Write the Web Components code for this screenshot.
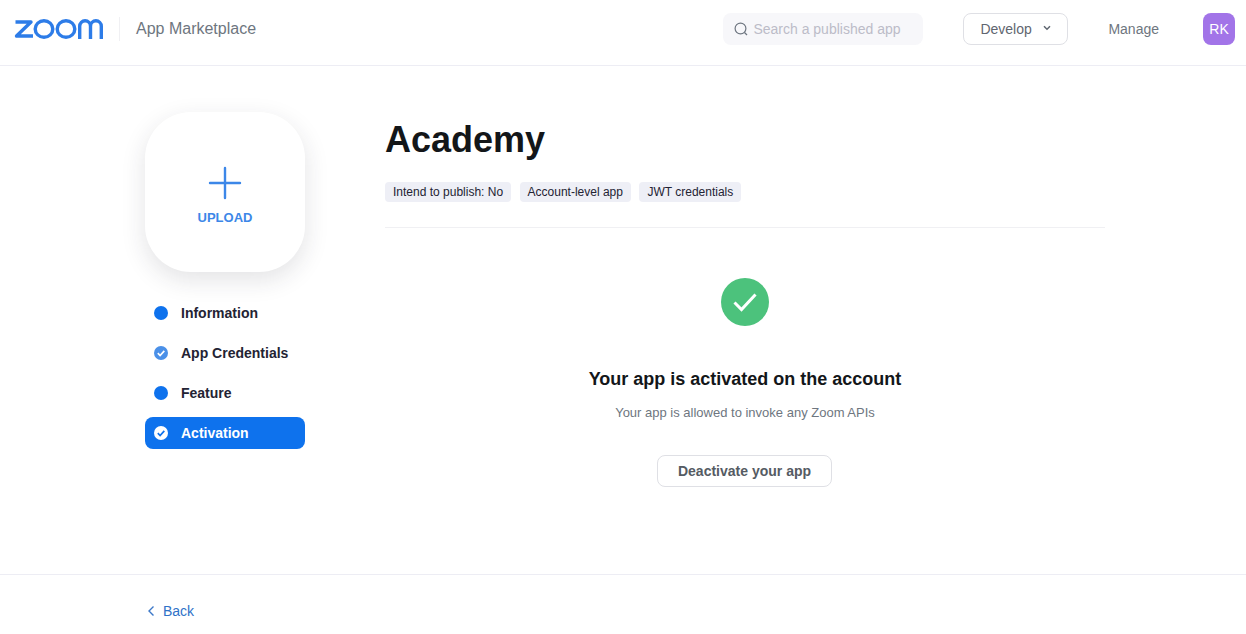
<!DOCTYPE html>
<html lang="en">
<head>
<meta charset="utf-8">
<title>App Marketplace</title>
<style>
  html, body { margin: 0; padding: 0; background: #fff; }
  body { font-family: "Liberation Sans", Arial, sans-serif; color: #131619; }
</style>
</head>
<body>
<app-shell></app-shell>
<script>
class SiteHeader extends HTMLElement {
  constructor () {
    super()
    this.attachShadow({ mode: 'open' }).innerHTML = `
      <style>
        :host { display: flex; align-items: center; height: 58px; padding: 0 11px 7px 14px; border-bottom: 1px solid #ededf4; }
        .logo { display: block; width: 90px; height: 20px; }
        .sep { width: 1px; height: 24px; background: #f0f0f3; margin: 0 16px 0 15px; }
        .brand { font-size: 16px; color: #6e7680; }
        .search { margin-left: auto; width: 200px; height: 32px; background: #f7f7fa; border-radius: 8px; display: flex; align-items: center; box-sizing: border-box; padding-left: 11px; gap: 5px; font-size: 14px; color: #bcbcc8; }
        .develop { margin-left: 40px; width: 105px; height: 32px; box-sizing: border-box; border: 1px solid #dfe0e5; border-radius: 8px; display: flex; align-items: center; padding-left: 16px; gap: 11px; font-size: 14px; color: #5f6670; }
        .develop svg { margin-top: -3px; }
        .manage { margin-left: 40px; font-size: 14px; color: #6e7680; }
        .avatar { margin-left: 44px; width: 32px; height: 32px; border-radius: 8px; background: #a274e8; color: #fff; font-size: 14px; display: flex; align-items: center; justify-content: center; }
      </style>
      <svg class="logo" viewBox="0 0 90 20" fill="none" stroke="#2d7ce8" stroke-width="3.4">
        <polyline points="1.5,3 17,3 2.5,17 19,17" stroke-linejoin="round"/>
        <ellipse cx="30" cy="10" rx="8.8" ry="8.3"/>
        <ellipse cx="52" cy="10" rx="8.8" ry="8.3"/>
        <path d="M65.7 20V7.2a5.4 5.4 0 0 1 10.8 0V20M76.5 7.2a5.4 5.4 0 0 1 10.8 0V20"/>
      </svg>
      <div class="sep"></div>
      <div class="brand">App Marketplace</div>
      <div class="search">
        <svg width="14" height="14" viewBox="0 0 14 14" fill="none" stroke="#6e7680" stroke-width="1.2"><circle cx="6.5" cy="6.5" r="5.4"/><path d="M10.5 10.5l2.5 2.5"/></svg>
        <span>Search a published app</span>
      </div>
      <div class="develop">
        <span>Develop</span>
        <svg width="8" height="6" viewBox="0 0 8 6" fill="none" stroke="#5f6670" stroke-width="1.5"><path d="M1 1.2l3 3 3-3"/></svg>
      </div>
      <div class="manage">Manage</div>
      <div class="avatar">RK</div>
    `
  }
}

class UploadCard extends HTMLElement {
  constructor () {
    super()
    this.attachShadow({ mode: 'open' }).innerHTML = `
      <style>
        :host { display: flex; flex-direction: column; align-items: center; width: 160px; height: 160px; border-radius: 46px; background: #fff; box-shadow: 0 8px 24px rgba(35, 35, 51, .13); box-sizing: border-box; padding-top: 54px; }
        svg { display: block; }
        span { margin-top: 9px; font-size: 13px; line-height: 18px; font-weight: 700; color: #3c87e8; }
      </style>
      <svg width="34" height="34" viewBox="0 0 34 34" stroke="#3c87e8" stroke-width="2.4" stroke-linecap="round"><path d="M17 2v30M2 17h30"/></svg>
      <span><slot></slot></span>
    `
  }
}

class StepItem extends HTMLElement {
  constructor () {
    super()
    this.attachShadow({ mode: 'open' })
  }

  connectedCallback () {
    const done = this.hasAttribute('done')
    const active = this.hasAttribute('active')
    const fill = active ? '#fff' : done ? '#4a90e8' : '#0e72ed'
    const tick = active ? '#0e72ed' : '#fff'
    this.shadowRoot.innerHTML = `
      <style>
        :host { display: flex; align-items: center; height: 32px; border-radius: 8px; padding-left: 9px; gap: 13px; font-size: 14px; font-weight: 700; color: ${active ? '#fff' : '#232333'}; background: ${active ? '#0e72ed' : 'transparent'}; }
        svg { display: block; flex: none; }
      </style>
      <svg width="14" height="14" viewBox="0 0 14 14">
        <circle cx="7" cy="7" r="7" fill="${fill}"/>
        ${done ? `<path d="M3.8 7.2l2.3 2.3 4.2-4.6" fill="none" stroke="${tick}" stroke-width="1.7"/>` : ''}
      </svg>
      <slot></slot>
    `
  }
}

class TagChip extends HTMLElement {
  constructor () {
    super()
    this.attachShadow({ mode: 'open' }).innerHTML = `
      <style>
        :host { display: inline-block; height: 20px; line-height: 20px; padding: 0 8px; border-radius: 4px; background: #eeeff6; font-size: 12px; color: #232333; }
      </style>
      <slot></slot>
    `
  }
}

class ActivationPanel extends HTMLElement {
  constructor () {
    super()
    this.attachShadow({ mode: 'open' }).innerHTML = `
      <style>
        :host { display: flex; flex-direction: column; align-items: center; padding-top: 50px; }
        svg { display: block; }
        h2 { margin: 40px 0 0; font-size: 18px; line-height: 26px; font-weight: 700; color: #131619; }
        p { margin: 12px 0 0; font-size: 13px; line-height: 18px; color: #6e7680; }
        button { margin: 33px 1px 0 0; width: 175px; height: 32px; padding: 0; background: #fff; border: 1px solid #dfe0e5; border-radius: 8px; font: 700 14px "Liberation Sans", Arial, sans-serif; color: #555b63; }
      </style>
      <svg width="48" height="48" viewBox="0 0 48 48">
        <circle cx="24" cy="24" r="24" fill="#4cc27c"/>
        <path d="M13.5 24.5l7 7 14-15" fill="none" stroke="#fff" stroke-width="3"/>
      </svg>
      <h2>Your app is activated on the account</h2>
      <p>Your app is allowed to invoke any Zoom APIs</p>
      <button>Deactivate your app</button>
    `
  }
}

class SiteFooter extends HTMLElement {
  constructor () {
    super()
    this.attachShadow({ mode: 'open' }).innerHTML = `
      <style>
        :host { display: flex; align-items: center; gap: 8px; height: 46px; padding: 13px 0 0 147px; border-top: 1px solid #ededf4; font-size: 14px; color: #2f72c8; }
        svg { display: block; }
      </style>
      <svg width="8" height="12" viewBox="0 0 8 12" fill="none" stroke="#3c78c8" stroke-width="1.4"><path d="M6.5 1.5L2 6l4.5 4.5"/></svg>
      <slot></slot>
    `
  }
}

class AppShell extends HTMLElement {
  constructor () {
    super()
    this.attachShadow({ mode: 'open' }).innerHTML = `
      <style>
        :host { display: flex; flex-direction: column; height: 634px; overflow: hidden; }
        .body { flex: 1; display: flex; padding: 46px 0 0 145px; min-height: 0; }
        aside { width: 160px; margin-right: 80px; }
        nav { display: flex; flex-direction: column; gap: 8px; margin-top: 25px; }
        main { width: 720px; }
        h1 { margin: 0; padding-top: 1px; font: 700 36px/53px "Liberation Sans", sans-serif; color: #131619; }
        .tags { display: flex; gap: 8.5px; margin-top: 16px; padding-bottom: 25px; border-bottom: 1px solid #f0f0f3; }
      </style>
      <site-header></site-header>
      <div class="body">
        <aside>
          <upload-card>UPLOAD</upload-card>
          <nav>
            <step-item>Information</step-item>
            <step-item done>App Credentials</step-item>
            <step-item>Feature</step-item>
            <step-item done active>Activation</step-item>
          </nav>
        </aside>
        <main>
          <h1>Academy</h1>
          <div class="tags">
            <tag-chip>Intend to publish: No</tag-chip>
            <tag-chip>Account-level app</tag-chip>
            <tag-chip>JWT credentials</tag-chip>
          </div>
          <activation-panel></activation-panel>
        </main>
      </div>
      <site-footer>Back</site-footer>
    `
  }
}

customElements.define('site-header', SiteHeader)
customElements.define('upload-card', UploadCard)
customElements.define('step-item', StepItem)
customElements.define('tag-chip', TagChip)
customElements.define('activation-panel', ActivationPanel)
customElements.define('site-footer', SiteFooter)
customElements.define('app-shell', AppShell)
</script>
</body>
</html>
